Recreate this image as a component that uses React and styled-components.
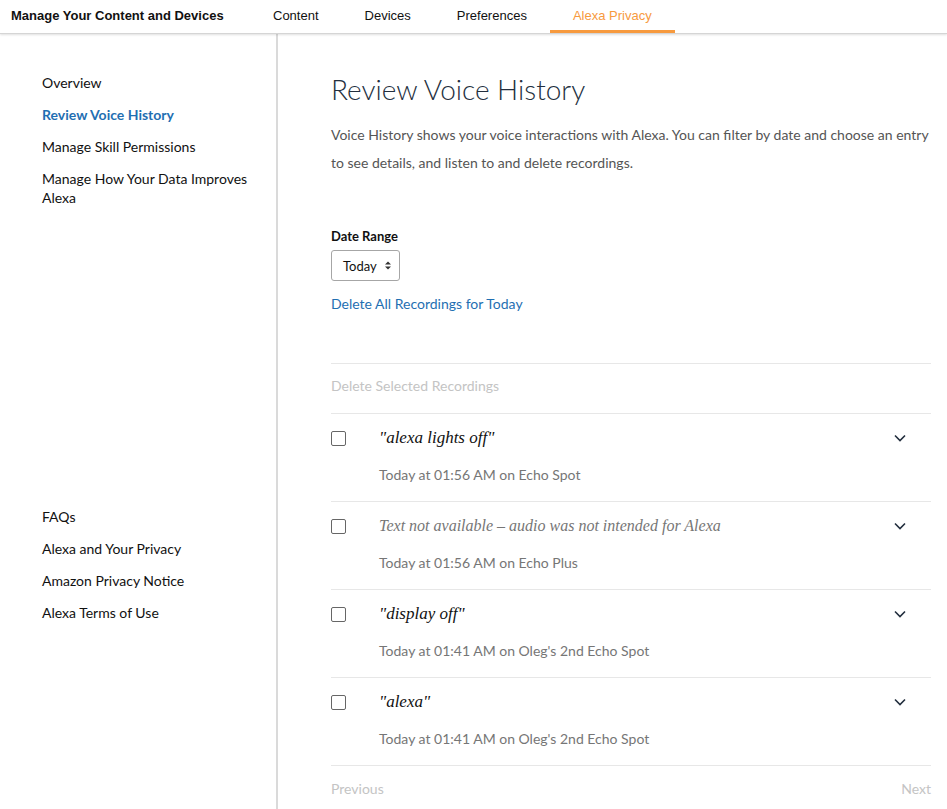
import React from 'react';
import styled, { createGlobalStyle } from 'styled-components';

const GlobalStyle = createGlobalStyle`
  html, body {
    margin: 0;
    padding: 0;
    background: #fff;
  }
  body {
    font-family: Lato, "Open Sans", sans-serif;
    color: #111;
  }
`;

const tabs = ['Content', 'Devices', 'Preferences', 'Alexa Privacy'];

const topLinks = [
  'Overview',
  'Review Voice History',
  'Manage Skill Permissions',
  'Manage How Your Data Improves Alexa',
];

const bottomLinks = ['FAQs', 'Alexa and Your Privacy', 'Amazon Privacy Notice', 'Alexa Terms of Use'];

const recordings = [
  { text: '"alexa lights off"', meta: 'Today at 01:56 AM on Echo Spot' },
  { text: 'Text not available – audio was not intended for Alexa', meta: 'Today at 01:56 AM on Echo Plus', muted: true },
  { text: '"display off"', meta: "Today at 01:41 AM on Oleg's 2nd Echo Spot" },
  { text: '"alexa"', meta: "Today at 01:41 AM on Oleg's 2nd Echo Spot" },
];

function Chevron() {
  return (
    <svg width="12" height="8" viewBox="0 0 12 8">
      <polyline points="1,1.5 6,6.5 11,1.5" fill="none" stroke="#232f3e" strokeWidth="1.6" />
    </svg>
  );
}

function SelectArrows() {
  return (
    <svg width="6" height="9" viewBox="0 0 6 9">
      <polygon points="0,3.5 3,0.5 6,3.5" fill="#333" />
      <polygon points="0,5.5 3,8.5 6,5.5" fill="#333" />
    </svg>
  );
}

function App() {
  return (
    <Page>
      <GlobalStyle />
      <TopNav>
        <Brand>Manage Your Content and Devices</Brand>
        {tabs.map((t) => (
          <Tab key={t} $active={t === 'Alexa Privacy'}>{t}</Tab>
        ))}
      </TopNav>

      <Body>
        <Sidebar>
          <NavGroup>
            {topLinks.map((l) => (
              <NavLink key={l} $active={l === 'Review Voice History'}>{l}</NavLink>
            ))}
          </NavGroup>
          <NavGroup>
            {bottomLinks.map((l) => (
              <NavLink key={l}>{l}</NavLink>
            ))}
          </NavGroup>
        </Sidebar>

        <Main>
          <Title>Review Voice History</Title>
          <Intro>
            Voice History shows your voice interactions with Alexa. You can filter by date and choose an entry
            to see details, and listen to and delete recordings.
          </Intro>

          <FieldLabel>Date Range</FieldLabel>
          <Select>
            Today <SelectArrows />
          </Select>
          <Link>Delete All Recordings for Today</Link>

          <Toolbar>Delete Selected Recordings</Toolbar>

          {recordings.map((r, i) => (
            <Row key={i}>
              <Checkbox />
              <Utterance $muted={r.muted}>{r.text}</Utterance>
              <Toggle><Chevron /></Toggle>
              <Meta>{r.meta}</Meta>
            </Row>
          ))}

          <Pager>
            <span>Previous</span>
            <span>Next</span>
          </Pager>
        </Main>
      </Body>
    </Page>
  );
}

const Page = styled.div`
  min-height: 809px;
  display: flex;
  flex-direction: column;
`;

const TopNav = styled.div`
  display: flex;
  align-items: stretch;
  height: 33px;
  border-bottom: 1px solid #d5d5d5;
  box-shadow: 0 1px 2px rgba(0, 0, 0, 0.12);
  font-family: "Liberation Sans", Arial, sans-serif;
  font-size: 13px;
  position: relative;
  z-index: 1;
`;

const Brand = styled.div`
  display: flex;
  align-items: center;
  padding-left: 11px;
  padding-bottom: 2px;
  width: 239px;
  font-weight: bold;
  color: #111;
`;

const Tab = styled.div`
  display: flex;
  align-items: center;
  padding: 1px 23px 0;
  color: ${(p) => (p.$active ? '#f79a3e' : '#111')};
  border-bottom: 3px solid ${(p) => (p.$active ? '#f79a3e' : 'transparent')};
`;

const Body = styled.div`
  display: flex;
  flex: 1;
`;

const Sidebar = styled.nav`
  width: 234px;
  flex-shrink: 0;
  padding: 39px 0 0 42px;
  border-right: 2px solid #dadada;
  display: flex;
  flex-direction: column;
  gap: 300px;
`;

const NavGroup = styled.div`
  display: flex;
  flex-direction: column;
  gap: 13px;
`;

const NavLink = styled.div`
  font-size: 14px;
  line-height: 19px;
  color: ${(p) => (p.$active ? '#1f6fb2' : '#111')};
  font-weight: ${(p) => (p.$active ? 'bold' : 'normal')};
  width: 220px;
`;

const Main = styled.main`
  flex: 1;
  padding: 0 16px 0 53px;
`;

const Title = styled.h1`
  margin: 37px 0 0;
  font-size: 28px;
  line-height: 36px;
  font-weight: 300;
  color: #232f3e;
`;

const Intro = styled.p`
  margin: 14px 0 0;
  font-size: 14px;
  line-height: 28px;
  color: #555;
`;

const FieldLabel = styled.div`
  margin-top: 50px;
  font-size: 13px;
  font-weight: bold;
  line-height: 18px;
  color: #111;
`;

const Select = styled.div`
  margin-top: 5px;
  width: 69px;
  height: 31px;
  box-sizing: border-box;
  border: 1px solid #a6a6a6;
  border-radius: 3px;
  display: flex;
  align-items: center;
  justify-content: space-between;
  padding: 0 8px 0 11px;
  font-size: 13px;
  color: #111;
`;

const Link = styled.div`
  margin-top: 13px;
  font-size: 14px;
  line-height: 20px;
  color: #1f6fb2;
`;

const Toolbar = styled.div`
  margin-top: 49px;
  border-top: 1px solid #e7e7e7;
  border-bottom: 1px solid #e7e7e7;
  padding: 13px 0 0;
  height: 36px;
  font-size: 14px;
  color: #c4c4c4;
`;

const Row = styled.div`
  display: grid;
  grid-template-columns: 48px 1fr 62px;
  grid-template-rows: 24px auto;
  row-gap: 15px;
  padding: 12px 0 14px;
  border-bottom: 1px solid #e7e7e7;
  height: 88px;
  box-sizing: border-box;
`;

const Checkbox = styled.span`
  width: 15px;
  height: 15px;
  box-sizing: border-box;
  border: 1px solid #666;
  border-radius: 2px;
  align-self: center;
`;

const Utterance = styled.div`
  font-family: "Liberation Serif", "Times New Roman", serif;
  font-style: italic;
  font-size: ${(p) => (p.$muted ? '16px' : '17px')};
  line-height: 24px;
  color: ${(p) => (p.$muted ? '#767676' : '#111')};
`;

const Toggle = styled.div`
  display: flex;
  align-items: center;
  justify-content: center;
`;

const Meta = styled.div`
  grid-column: 2 / 3;
  font-size: 14px;
  line-height: 20px;
  color: #767676;
`;

const Pager = styled.div`
  display: flex;
  justify-content: space-between;
  padding-top: 14px;
  font-size: 14px;
  color: #c4c4c4;
`;

export default App;
